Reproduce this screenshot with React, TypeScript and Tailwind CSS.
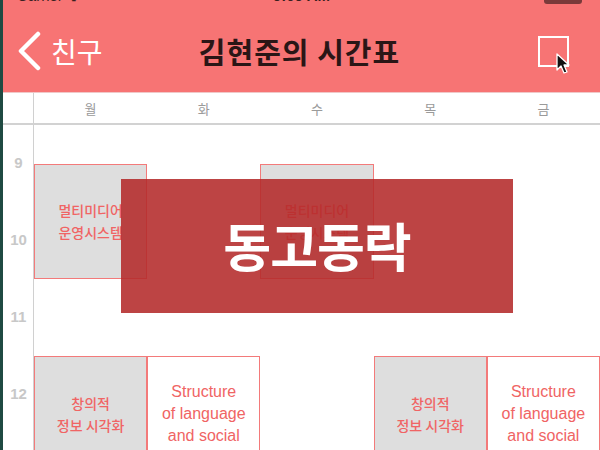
const days = ["월", "화", "수", "목", "금"];
const hours = ["9", "10", "11", "12"];

type Block = {
  lines: string[];
  col: string;
  row: string;
  gray: boolean;
  en?: boolean;
};

const blocks: Block[] = [
  { lines: ["멀티미디어", "운영시스템"], col: "col-start-2", row: "row-start-3", gray: true },
  { lines: ["멀티미디어", "운영시스템"], col: "col-start-4", row: "row-start-3", gray: true },
  { lines: ["창의적", "정보 시각화"], col: "col-start-2", row: "row-start-8", gray: true },
  { lines: ["Structure", "of language", "and social"], col: "col-start-3", row: "row-start-8", gray: false, en: true },
  { lines: ["창의적", "정보 시각화"], col: "col-start-5", row: "row-start-8", gray: true },
  { lines: ["Structure", "of language", "and social"], col: "col-start-6", row: "row-start-8", gray: false, en: true },
];

const kr = { fontFamily: '"Noto Sans CJK KR", "Noto Sans", sans-serif' };

export default function App() {
  return (
    <div className="w-[600px] h-[450px] overflow-hidden flex flex-row bg-white relative" style={kr}>
      <div className="w-[3px] h-full bg-[#1f4a42]" />
      <div className="flex-1 flex flex-col">
        <header className="h-[92px] shrink-0 bg-[#f77474] flex flex-col">
          <div className="h-[4px] overflow-hidden relative">
            <div className="flex flex-row items-end justify-between px-[14px] -mt-[12px] text-[15px] leading-[16px] text-[#3a1f1f]" style={{ fontFamily: '"Liberation Sans", sans-serif' }}>
              <span className="w-[120px]">Carrier ᯤ</span>
              <span className="font-bold">9:09 AM</span>
              <span className="w-[120px] flex justify-end">
                <span className="w-[38px] h-[16px] rounded-[3px] bg-[#7a3a3a] mr-[4px]" />
              </span>
            </div>
          </div>
          <div className="flex-1 flex flex-row items-center justify-between pl-[13px] pr-[31px] pt-[6px]">
            <div className="flex flex-row items-center w-[150px]">
              <svg width="26" height="40" viewBox="0 0 26 40">
                <polyline points="22,3 5,20 22,37" fill="none" stroke="#fff" strokeWidth="4.5" strokeLinecap="round" strokeLinejoin="round" />
              </svg>
              <span className="text-white text-[28px] leading-none ml-[9px]">친구</span>
            </div>
            <h1 className="text-[#2a1616] text-[29px] font-bold leading-none tracking-[1px]">김현준의 시간표</h1>
            <div className="w-[136px] flex justify-end relative">
              <div className="w-[31px] h-[31px] border-2 border-white" />
              <svg className="absolute left-[122px] top-[17px]" width="16" height="22" viewBox="0 0 16 22">
                <path d="M2 1 L2 17 L6 13 L9 20 L12 19 L9 12 L14 12 Z" fill="#111" stroke="#fff" strokeWidth="1.3" strokeLinejoin="round" />
              </svg>
            </div>
          </div>
        </header>
        <div className="h-[1px] shrink-0 bg-[#f0c8c8]" />
        <div className="flex-1 grid grid-cols-[31px_repeat(5,1fr)] grid-rows-[32px_repeat(9,38.5px)] relative">
          <div className="col-start-1 row-start-1 row-span-10 border-r border-[#d0d0d0]" />
          <div className="col-start-1 col-span-6 row-start-1 border-b-2 border-[#d2d2d2]" />
          {days.map((d, i) => (
            <div
              key={d}
              className={`row-start-1 flex items-center justify-center text-[13px] text-[#9a9a9a] ${["col-start-2", "col-start-3", "col-start-4", "col-start-5", "col-start-6"][i]}`}
            >
              {d}
            </div>
          ))}
          {hours.map((h, i) => (
            <div
              key={h}
              className={`col-start-1 row-span-2 flex items-center justify-center text-[15px] font-bold text-[#c8c8c8] ${["row-start-2", "row-start-4", "row-start-6", "row-start-8"][i]}`}
              style={{ fontFamily: '"Liberation Sans", sans-serif' }}
            >
              {h}
            </div>
          ))}
          {blocks.map((b, i) => (
            <div
              key={i}
              className={`${b.col} ${b.row} row-span-3 relative z-10 border-[1.5px] border-[#f37a7a] flex flex-col items-center justify-center text-center text-[#f06464] ${
                b.gray ? "bg-[#dedede]" : "bg-white"
              } ${b.en ? "text-[16px] leading-[22px]" : "text-[14px] leading-[22px] font-medium"}`}
              style={b.en ? { fontFamily: '"Liberation Sans", sans-serif' } : undefined}
            >
              {b.lines.map((l) => (
                <span key={l}>{l}</span>
              ))}
            </div>
          ))}
        </div>
      </div>
      <div className="absolute left-[121px] top-[179px] w-[392px] h-[134px] bg-[#b42a2a]/[0.88] z-20 flex items-center justify-center">
        <span className="text-white text-[52px] font-bold leading-none tracking-[-1px] -mt-[3px]">동고동락</span>
      </div>
    </div>
  );
}
